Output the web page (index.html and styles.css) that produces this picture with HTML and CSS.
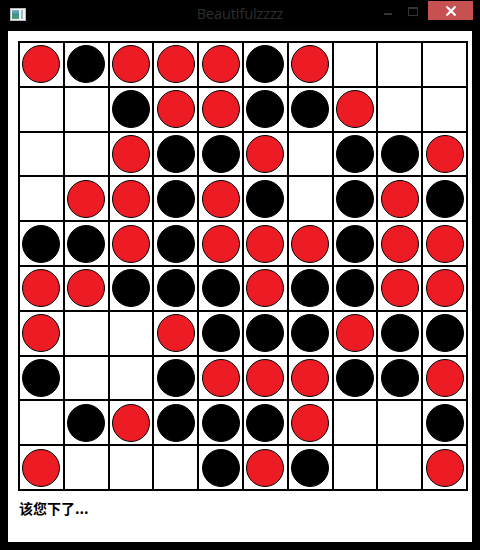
FILE: index.html
```html
<!DOCTYPE html>
<html>
<head>
<meta charset="utf-8">
<link rel="stylesheet" href="styles.css">
</head>
<body>
<div class="window">
  <div class="titlebar">
    <div class="tb-left">
      <svg class="appicon" width="16" height="13" viewBox="0 0 16 13">
        <rect x="0.5" y="0.5" width="15" height="12" fill="#f4f4f4" stroke="#b9b9b9"/>
        <defs>
          <linearGradient id="g" x1="0" y1="0" x2="0" y2="1">
            <stop offset="0" stop-color="#7fb2c9"/>
            <stop offset="0.5" stop-color="#3f8f8e"/>
            <stop offset="1" stop-color="#4f9f6f"/>
          </linearGradient>
        </defs>
        <rect x="2" y="2" width="7" height="9" fill="url(#g)"/>
        <rect x="11" y="2" width="2" height="9" fill="#9fb7c6"/>
      </svg>
    </div>
    <div class="title">Beautifulzzzz</div>
    <div class="tb-right">
      <div class="btn-min"><span></span></div>
      <div class="btn-max"><span></span></div>
      <div class="btn-close">
        <svg width="12" height="10" viewBox="0 0 12 10">
          <path d="M1.5 0.5 L10.5 9.5 M10.5 0.5 L1.5 9.5" stroke="#fff" stroke-width="2.2"/>
        </svg>
      </div>
    </div>
  </div>
  <div class="client">
    <div class="board">
      <div class="c"><i class="r"></i></div><div class="c"><i class="b"></i></div><div class="c"><i class="r"></i></div><div class="c"><i class="r"></i></div><div class="c"><i class="r"></i></div><div class="c"><i class="b"></i></div><div class="c"><i class="r"></i></div><div class="c"></div><div class="c"></div><div class="c"></div>
      <div class="c"></div><div class="c"></div><div class="c"><i class="b"></i></div><div class="c"><i class="r"></i></div><div class="c"><i class="r"></i></div><div class="c"><i class="b"></i></div><div class="c"><i class="b"></i></div><div class="c"><i class="r"></i></div><div class="c"></div><div class="c"></div>
      <div class="c"></div><div class="c"></div><div class="c"><i class="r"></i></div><div class="c"><i class="b"></i></div><div class="c"><i class="b"></i></div><div class="c"><i class="r"></i></div><div class="c"></div><div class="c"><i class="b"></i></div><div class="c"><i class="b"></i></div><div class="c"><i class="r"></i></div>
      <div class="c"></div><div class="c"><i class="r"></i></div><div class="c"><i class="r"></i></div><div class="c"><i class="b"></i></div><div class="c"><i class="r"></i></div><div class="c"><i class="b"></i></div><div class="c"></div><div class="c"><i class="b"></i></div><div class="c"><i class="r"></i></div><div class="c"><i class="b"></i></div>
      <div class="c"><i class="b"></i></div><div class="c"><i class="b"></i></div><div class="c"><i class="r"></i></div><div class="c"><i class="b"></i></div><div class="c"><i class="r"></i></div><div class="c"><i class="r"></i></div><div class="c"><i class="r"></i></div><div class="c"><i class="b"></i></div><div class="c"><i class="r"></i></div><div class="c"><i class="r"></i></div>
      <div class="c"><i class="r"></i></div><div class="c"><i class="r"></i></div><div class="c"><i class="b"></i></div><div class="c"><i class="b"></i></div><div class="c"><i class="b"></i></div><div class="c"><i class="r"></i></div><div class="c"><i class="b"></i></div><div class="c"><i class="b"></i></div><div class="c"><i class="r"></i></div><div class="c"><i class="r"></i></div>
      <div class="c"><i class="r"></i></div><div class="c"></div><div class="c"></div><div class="c"><i class="r"></i></div><div class="c"><i class="b"></i></div><div class="c"><i class="b"></i></div><div class="c"><i class="b"></i></div><div class="c"><i class="r"></i></div><div class="c"><i class="b"></i></div><div class="c"><i class="b"></i></div>
      <div class="c"><i class="b"></i></div><div class="c"></div><div class="c"></div><div class="c"><i class="b"></i></div><div class="c"><i class="r"></i></div><div class="c"><i class="r"></i></div><div class="c"><i class="r"></i></div><div class="c"><i class="b"></i></div><div class="c"><i class="b"></i></div><div class="c"><i class="r"></i></div>
      <div class="c"></div><div class="c"><i class="b"></i></div><div class="c"><i class="r"></i></div><div class="c"><i class="b"></i></div><div class="c"><i class="b"></i></div><div class="c"><i class="b"></i></div><div class="c"><i class="r"></i></div><div class="c"></div><div class="c"></div><div class="c"><i class="b"></i></div>
      <div class="c"><i class="r"></i></div><div class="c"></div><div class="c"></div><div class="c"></div><div class="c"><i class="b"></i></div><div class="c"><i class="r"></i></div><div class="c"><i class="b"></i></div><div class="c"></div><div class="c"></div><div class="c"><i class="r"></i></div>
    </div>
    <div class="status">该您下了...</div>
  </div>
</div>
</body>
</html>
```

FILE: styles.css
```css
html, body {
  margin: 0;
  padding: 0;
  background: #000;
}
.window {
  width: 480px;
  height: 550px;
  background: #000;
  display: flex;
  flex-direction: column;
}
.titlebar {
  height: 31px;
  display: grid;
  grid-template-columns: 1fr auto 1fr;
  align-items: start;
}
.tb-left {
  padding: 8px 0 0 10px;
}
.appicon {
  display: block;
}
.title {
  font-family: "Open Sans", "Noto Sans", sans-serif;
  font-size: 14.5px;
  line-height: 18px;
  padding-top: 5px;
  color: #2e2e2e;
  letter-spacing: -0.1px;
}
.tb-right {
  display: flex;
  justify-content: flex-end;
  align-items: flex-start;
  padding-right: 7px;
}
.btn-min {
  width: 26px;
  height: 20px;
  position: relative;
}
.btn-min span {
  position: absolute;
  left: 8px;
  top: 13px;
  width: 8px;
  height: 2px;
  background: #333;
}
.btn-max {
  width: 26px;
  height: 20px;
  position: relative;
}
.btn-max span {
  position: absolute;
  left: 6px;
  top: 7px;
  width: 8px;
  height: 6px;
  border: 1px solid #333;
  border-top-width: 2px;
}
.btn-close {
  margin-top: 1px;
  width: 45px;
  height: 19px;
  background: #c75050;
  display: flex;
  align-items: center;
  justify-content: center;
}
.btn-close svg {
  display: block;
}
.client {
  margin-left: 8px;
  width: 464px;
  height: 511px;
  background: #fff;
  box-sizing: border-box;
  padding: 10px 0 0 10px;
}
.board {
  width: 450px;
  height: 450px;
  box-sizing: border-box;
  background: #000;
  padding: 2px;
  display: grid;
  grid-template-columns: repeat(10, 1fr);
  grid-template-rows: repeat(10, 1fr);
  gap: 2px;
}
.c {
  background: #fff;
  display: flex;
  align-items: center;
  justify-content: center;
}
.c i {
  display: block;
  width: 38px;
  height: 38px;
  box-sizing: border-box;
  border-radius: 50%;
  border: 1px solid #000;
}
.c i.r {
  background: #ed1c24;
}
.c i.b {
  background: #000;
}
.status {
  margin-top: 8px;
  padding-left: 1px;
  font-family: "Noto Sans CJK SC", sans-serif;
  font-weight: bold;
  font-size: 14px;
  line-height: 18px;
  color: #000;
}
```
